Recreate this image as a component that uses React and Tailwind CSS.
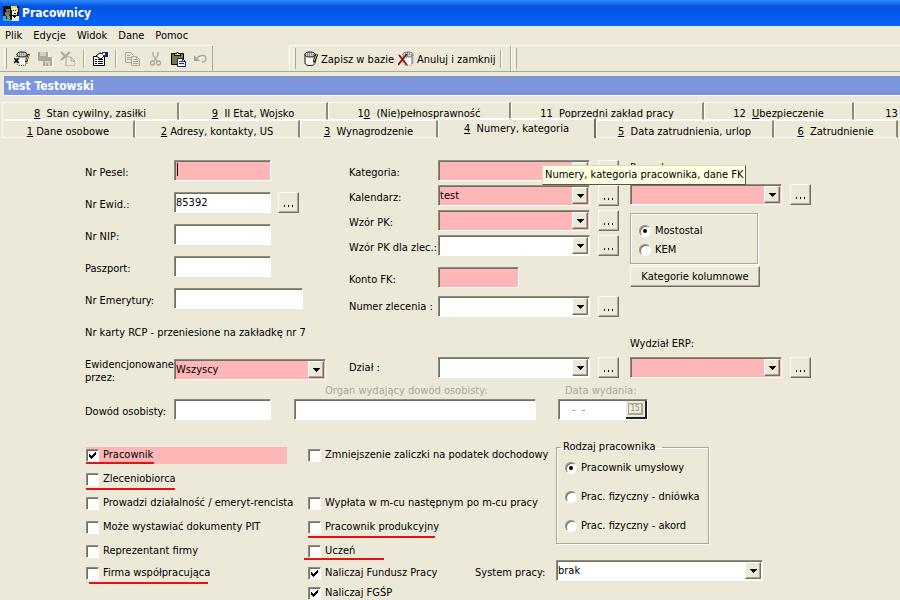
import clsx from 'clsx'

const sunken =
  'border border-t-[#8f8d80] border-l-[#8f8d80] border-r-white border-b-white shadow-[inset_1px_1px_0_#716f64] outline-none rounded-none'
const raised =
  'bg-[#ece9d8] border border-t-white border-l-white border-r-[#716f64] border-b-[#716f64] shadow-[inset_-1px_-1px_0_#aca899]'
const etched = 'border border-[#aca899] shadow-[1px_1px_0_#fff,inset_1px_1px_0_#fff]'

function TextField({ id, label, width = 'w-[97px]', pink, value = '', children }) {
  return (
    <div className="flex h-[21px]">
      <label htmlFor={id} className="w-[89px] shrink-0 pt-[5px]">{label}</label>
      <input
        id={id}
        defaultValue={value}
        className={clsx(sunken, width, 'h-[21px] pb-px pl-px', pink ? 'bg-[#ffb6b6]' : 'bg-white')}
      />
      {children}
    </div>
  )
}

function Combo({ id, value = '', pink, width = 'w-[152px]' }) {
  return (
    <div className={clsx('relative h-[21px] shrink-0', width)}>
      <select
        id={id}
        className={clsx(sunken, 'block h-[21px] w-full appearance-none pt-px pl-px pr-5', pink ? 'bg-[#ffb6b6]' : 'bg-white')}
      >
        <option>{value}</option>
      </select>
      <span className={clsx(raised, 'pointer-events-none absolute top-0.5 right-0.5 flex h-[17px] w-4 items-center justify-center')}>
        <svg width="7" height="4" viewBox="0 0 7 4" shapeRendering="crispEdges">
          <path d="M0 0h7v1H0zM1 1h5v1H1zM2 2h3v1H2zM3 3h1v1H3z" />
        </svg>
      </span>
    </div>
  )
}

function DotsButton({ label }) {
  return (
    <button type="button" aria-label={label} className={clsx(raised, 'flex h-[21px] w-[21px] shrink-0 items-center justify-center')}>
      <svg width="10" height="10" viewBox="0 0 10 10" shapeRendering="crispEdges">
        <path d="M0 7h1v2H0zM4 7h1v2H4zM8 7h1v2H8z" />
      </svg>
    </button>
  )
}

function ComboRow({ id, label, labelPad = 'pt-[5px]', ...rest }) {
  return (
    <div className="flex h-[21px]">
      <label htmlFor={id} className={clsx('w-[89px] shrink-0', labelPad)}>{label}</label>
      <Combo id={id} {...rest} />
      <div className="ml-2"><DotsButton label={label} /></div>
    </div>
  )
}

function Check({ label, checked, mark, pink, height = 'h-6' }) {
  return (
    <div className={clsx('relative flex items-center', height)}>
      <label className={clsx('flex items-center gap-1', pink && 'h-[17px] w-[201px] bg-[#ffb6b6]')}>
        <span className="relative h-[13px] w-[13px]">
          <input
            type="checkbox"
            defaultChecked={checked}
            className={clsx(sunken, 'peer block h-[13px] w-[13px] appearance-none bg-white')}
          />
          <svg
            width="7" height="7" viewBox="0 0 7 7" shapeRendering="crispEdges"
            className="pointer-events-none absolute top-[3px] left-[3px] hidden peer-checked:block"
          >
            <path d="M0 2h1v3H0zM1 3h1v3H1zM2 4h1v3H2zM3 3h1v3H3zM4 2h1v3H4zM5 1h1v3H5zM6 0h1v3H6z" />
          </svg>
        </span>
        {label}
      </label>
      {mark && <span className={clsx('absolute h-0.5 bg-[#e01414]', mark)} />}
    </div>
  )
}

function Radio({ name, label, checked }) {
  return (
    <label className="flex items-center gap-1">
      <span className="relative h-3 w-3">
        <input
          type="radio"
          name={name}
          defaultChecked={checked}
          className={clsx(sunken, 'peer block h-3 w-3 appearance-none !rounded-full bg-white')}
        />
        <span className="pointer-events-none absolute top-1 left-1 hidden h-1 w-1 rounded-full bg-black peer-checked:block" />
      </span>
      {label}
    </label>
  )
}

function Tab({ num, pre = '', label, width, active }) {
  return (
    <button
      type="button"
      role="tab"
      aria-selected={!!active}
      className={clsx(
        'shrink-0 border-t border-l border-white text-center',
        active
          ? 'relative -mt-0.5 h-5 border-r-2 border-r-[#716f64]'
          : 'h-[18px] border-r-2 border-b border-r-[#8b897c] pt-[3px]',
        width
      )}
    >
      {pre}{num && <u>{num}</u>}{label}
    </button>
  )
}

function Grip() {
  return <span className="h-[21px] w-[3px] border-l border-r border-l-white border-r-[#aca899]" />
}

function Sep() {
  return <span className="block h-[18px] w-0.5 border-l border-r border-l-[#aca899] border-r-white" />
}

function ToolButton({ label, children }) {
  return (
    <button type="button" aria-label={label} className="flex h-5 w-4 items-center justify-center">
      {children}
    </button>
  )
}

function Icon({ children }) {
  return <svg width="17" height="16" viewBox="0 0 17 16" className="shrink-0" fill="none">{children}</svg>
}

function Database({ dim, dotted }) {
  const line = dim ? '#77776c' : '#111'
  return (
    <g>
      <path d="M3 3v9c0 1.500 2 2.500 5 2.500s5-1 5-2.500V3" fill="#fff" stroke={line} strokeDasharray={dim || dotted ? '1 1' : 'none'} />
      <path d="M11 5v8.500c1.500-.5 2-1 2-1.500V4z" fill="#aaa" />
      <ellipse cx="8" cy="3.500" rx="5" ry="2.500" fill="#ccc" stroke={line} />
      <path d="M5 3h1M7 2h1M9 3h1M7 4h1M11 4h1M5 5h1" stroke="#555" />
    </g>
  )
}

function AppIcon() {
  return (
    <svg width="16" height="16" viewBox="0 0 16 16" shapeRendering="crispEdges">
      <path d="M0 1h16v14H0z" fill="#101820" />
      <path d="M2 4h5v6H2z" fill="#8d6f60" />
      <path d="M1 2h6v2H3v3H1z" fill="#080808" />
      <path d="M9 3h5v7H9z" fill="#f4ecc8" />
      <path d="M8 1h6v2H10v2H8zM13 3h2v4h-1z" fill="#e9db50" />
      <path d="M10 5h1v1h-1zM12 5h1v1h-1zM11 8h2v1h-2zM3 6h1v1H3zM5 6h1v1H5z" fill="#223" />
      <path d="M0 11h3v-1h3v1h2v5H0z" fill="#55a5a5" />
      <path d="M8 11h2l1 2 2-2h3v5H8z" fill="#e8f0ee" />
      <path d="M7 9h2v6H7zM3 11h1v3H3z" fill="#111" />
    </svg>
  )
}

const disabled = '#aca899'

function Toolbar() {
  return (
    <div className="flex h-[27px] shrink-0 border-b border-[#aca899]">
      <div className="flex w-[213px] shrink-0 items-center border-t border-r border-t-white border-r-[#aca899] pl-1">
        <Grip />
        <div className="ml-[7px] flex items-center gap-[7px]">
          <ToolButton label="Baza">
            <Icon>
              <Database dotted />
              <path d="M0 7l5 5M5 7l-5 5" stroke="#000" strokeWidth="1.500" />
              <path d="M15 3l-3 8" stroke="#000" strokeWidth="2" />
              <path d="M15 4l-3 6" stroke="#e6de50" />
            </Icon>
          </ToolButton>
          <ToolButton label="Zapisz">
            <Icon>
              <path d="M1 1h10v9H1zM6 6h9v9H6z" fill={disabled} />
              <path d="M3 1h6v4H3zM8 10h5v5H8z" fill="#d6d2c2" />
              <path d="M9 12h2v3H9zM8 6h5v2H8z" fill={disabled} />
              <path d="M12 1v5M16 7v9H6" stroke="#fff" />
            </Icon>
          </ToolButton>
          <ToolButton label="Usuń">
            <Icon>
              <path d="M1 1l9 9M10 1L1 9" stroke={disabled} strokeWidth="2" />
              <path d="M6 6h5l4 4v5H6z" fill="#ece9d8" stroke={disabled} />
              <path d="M11 6v4h4" stroke={disabled} />
              <path d="M16 10v6H7" stroke="#fff" />
            </Icon>
          </ToolButton>
          <Sep />
          <ToolButton label="Właściwości">
            <Icon>
              <path d="M1.500 5.500h11v9h-11z" fill="#fff" stroke="#000" />
              <path d="M3 8.500h2M6 8.500h5M3 10.500h2M6 10.500h5M3 12.500h2M6 12.500h5" stroke="#000" />
              <path d="M4 5l4-3 3 1 1 2-3 3-2-1z" fill="#fff" stroke="#000" />
              <path d="M10 1h6v5h-4z" fill="#1c2a7c" />
              <path d="M11 2h2v2h-2z" fill="#fff" />
            </Icon>
          </ToolButton>
          <Sep />
          <ToolButton label="Kopiuj">
            <Icon>
              <path d="M1.500 1.500h5l3 3v7h-8z" stroke={disabled} />
              <path d="M7.500 5.500h5l3 3v6h-8z" fill="#ece9d8" stroke={disabled} />
              <path d="M3 4.500h3M3 6.500h4M3 8.500h4M9 8.500h3M9 10.500h5M9 12.500h5M12.500 6v3H15" stroke={disabled} />
            </Icon>
          </ToolButton>
          <ToolButton label="Wytnij">
            <Icon>
              <path d="M6 1v3l4 6M11 1v3l-4 6" stroke={disabled} strokeWidth="1.300" />
              <circle cx="5.500" cy="12" r="2" stroke={disabled} strokeWidth="1.300" />
              <circle cx="11.500" cy="12" r="2" stroke={disabled} strokeWidth="1.300" />
            </Icon>
          </ToolButton>
          <ToolButton label="Wklej">
            <Icon>
              <path d="M1.500 2.500h12v11h-12z" fill="#77774a" stroke="#000" />
              <path d="M4.500 3.500V2.500h2l1-1.500 1 1.500h2v2h-6z" fill="#e8e4a0" stroke="#000" />
              <path d="M7.500 7.500h5l3 3v5h-8z" fill="#fff" stroke="#1c2460" />
              <path d="M9 10.500h3M9 12.500h5M12.500 8v2.500H15" stroke="#1c2460" />
            </Icon>
          </ToolButton>
          <ToolButton label="Cofnij">
            <Icon>
              <path d="M3 8c3-4 9-5 10-1 .5 2-1 4-4 4" stroke={disabled} strokeWidth="1.300" />
              <path d="M1 4v6h6z" fill={disabled} />
            </Icon>
          </ToolButton>
        </div>
      </div>
      <div className="ml-[76px] flex w-[222px] shrink-0 items-center border-t border-r border-l border-t-white border-r-[#aca899] border-l-white pl-[3px]">
        <Grip />
        <button type="button" className="ml-1.5 flex items-center gap-0.5">
          <Icon>
            <Database />
            <path d="M15 3l-3 8" stroke="#000" strokeWidth="2.500" />
            <path d="M15 3l-3 7" stroke="#e6de50" />
          </Icon>
          <span className="pt-0.5">Zapisz w bazie</span>
        </button>
        <button type="button" className="ml-1 flex items-center gap-0.5">
          <Icon>
            <g transform="translate(2 0)"><Database dim /></g>
            <path d="M1 4l8 10M9 3L0 14" stroke="#7c1212" strokeWidth="1.800" />
          </Icon>
          <span className="pt-0.5">Anuluj i zamknij</span>
        </button>
        <div className="ml-1"><Sep /></div>
      </div>
      <div className="flex flex-1 items-center border-t border-l border-white pl-0.5">
        <Grip />
      </div>
    </div>
  )
}

export default function App() {
  return (
    <div className="flex h-screen flex-col overflow-hidden bg-[#ece9d8] font-['DejaVu_Sans_Condensed','DejaVu_Sans',sans-serif] text-[11px] leading-4 whitespace-nowrap text-black">
      <header className="flex h-[26px] shrink-0 items-center gap-[3px] bg-linear-to-b from-[#2f8bff] via-[#0452e0] via-25% to-[#0562fb] pl-[3px] text-xs font-bold text-white">
        <AppIcon />
        <h1>Pracownicy</h1>
      </header>

      <nav className="flex h-[19px] shrink-0 items-center gap-[11px] pl-[5px]">
        {['Plik', 'Edycje', 'Widok', 'Dane', 'Pomoc'].map(m => (
          <button key={m} type="button">{m}</button>
        ))}
      </nav>

      <Toolbar />

      <div className="mt-1 ml-1 h-5 shrink-0 border-t border-b border-t-[#8a98b4] border-b-white bg-[#7b95de] pt-px pl-0.5 text-xs leading-4 font-bold text-white">
        Test Testowski
      </div>

      <div role="tablist" className="mt-1.5 ml-0.5 shrink-0">
        <div className="flex">
          <Tab num="8" label="&nbsp; Stan cywilny, zasiłki" width="w-[177px]" />
          <Tab num="9" label="&nbsp; II Etat, Wojsko" width="w-[149px]" />
          <Tab pre="1" num="0" label="&nbsp; (Nie)pełnosprawność" width="w-[183px]" />
          <Tab pre={'11\u00a0 Pop'} num="r" label="zedni zakład pracy" width="w-[193px]" />
          <Tab pre={'12\u00a0 '} num="U" label="bezpieczenie" width="w-[150px]" />
          <Tab pre="13" label="" width="w-[76px]" />
        </div>
        <div className="flex">
          <Tab num="1" label=" Dane osobowe" width="w-[133px]" />
          <Tab num="2" label=" Adresy, kontakty, US" width="w-[165px]" />
          <Tab num="3" label="&nbsp; Wynagrodzenie" width="w-[138px]" />
          <Tab num="4" label="&nbsp; Numery, kategoria" width="w-[158px]" active />
          <Tab num="5" label="&nbsp; Data zatrudnienia, urlop" width="w-[178px]" />
          <Tab num="6" label="&nbsp; Zatrudnienie" width="w-[124px]" />
        </div>
      </div>

      <form className="pt-[22px] pl-[85px]">
        <div className="flex">
          {/* identification numbers */}
          <div className="flex w-[264px] shrink-0 flex-col gap-[11px]">
            <div className="relative">
              <TextField id="pesel" label="Nr Pesel:" pink />
              <span className="absolute top-[3px] left-[92px] h-[13px] w-px bg-black" />
            </div>
            <TextField id="ewid" label="Nr Ewid.:" value="85392">
              <div className="ml-[7px]"><DotsButton label="Nr Ewid." /></div>
            </TextField>
            <TextField id="nip" label="Nr NIP:" />
            <TextField id="paszport" label="Paszport:" />
            <TextField id="emerytura" label="Nr Emerytury:" width="w-[129px]" />
            <p className="h-[21px] pt-[5px]">Nr karty RCP - przeniesione na zakładkę nr 7</p>
            <div className="mt-[7px] flex h-[21px]">
              <label htmlFor="przez" className="-mt-px w-[89px] shrink-0 leading-[13px]">Ewidencjonowane<br />przez:</label>
              <Combo id="przez" value="Wszyscy" pink />
            </div>
          </div>

          {/* category and accounting */}
          <div className="relative flex w-[281px] shrink-0 flex-col gap-1">
            <ComboRow id="kategoria" label="Kategoria:" pink />
            <ComboRow id="kalendarz" label="Kalendarz:" value="test" pink />
            <ComboRow id="wzor" label="Wzór PK:" pink />
            <ComboRow id="wzorzlec" label="Wzór PK dla zlec.:" />
            <div className="mt-[7px]">
              <TextField id="konto" label="Konto FK:" width="w-[81px]" pink />
            </div>
            <div className="mt-1"><ComboRow id="zlecenie" label="Numer zlecenia :" labelPad="pt-[3px]" /></div>
            <div className="mt-9"><ComboRow id="dzial" label="Dział :" labelPad="pt-[3px]" /></div>
            <div role="tooltip" className="absolute top-[5px] left-[193px] z-10 border border-t-[#d8d6c0] border-r-[#55534a] border-b-[#55534a] border-l-[#d8d6c0] bg-[#ffffe1] pr-px pl-0.5 leading-[18px]">
              Numery, kategoria pracownika, dane FK
            </div>
          </div>

          {/* employer */}
          <div className="w-[181px] shrink-0">
            <label htmlFor="pracodawca" className="block h-6">Pracodawca:</label>
            <div className="flex gap-2">
              <Combo id="pracodawca" pink />
              <DotsButton label="Pracodawca" />
            </div>
            <div className={clsx(etched, 'mt-2 flex h-[51px] w-[128px] flex-col justify-center gap-[3px] pt-1 pl-2')}>
              <Radio name="firma" label="Mostostal" checked />
              <Radio name="firma" label="KEM" />
            </div>
            <button type="button" className={clsx(raised, 'mt-0.5 block h-[21px] w-[130px] pt-px')}>Kategorie kolumnowe</button>
            <label htmlFor="erp" className="mt-[49px] block">Wydział ERP:</label>
            <div className="mt-[5px] flex gap-2">
              <Combo id="erp" pink />
              <DotsButton label="Wydział ERP" />
            </div>
          </div>
        </div>

        {/* identity card */}
        <div className="mt-[3px] flex items-end">
          <TextField id="dowod" label="Dowód osobisty:" />
          <div className="ml-[23px] w-[242px]">
            <label htmlFor="organ" className="block pl-[31px] text-[#aca899]">Organ wydający dowód osobisty:</label>
            <input id="organ" className={clsx(sunken, 'block h-[21px] w-full bg-white px-0.5')} />
          </div>
          <div className="ml-[22px] w-[90px]">
            <label htmlFor="data" className="block pl-[7px] text-[#aca899]">Data wydania:</label>
            <div className={clsx(sunken, 'flex h-[21px] bg-white pt-px pl-px')}>
              <input id="data" disabled defaultValue="-  -" className="w-full min-w-0 pl-3 text-[#8a887c]" />
              <button type="button" disabled aria-label="Kalendarz" className="flex h-[18px] w-[21px] shrink-0 items-center justify-center border-r-2 border-b-2 border-[#222] bg-[#ece9d8] text-[#8f8d80]">
                <span className="border border-r-2 border-b-2 border-[#aca899] px-px text-[8px] leading-[9px]">15</span>
              </button>
            </div>
          </div>
        </div>

        {/* flags */}
        <div className="mt-[23px] ml-px flex">
          <div className="w-[222px] shrink-0">
            <Check label="Pracownik" checked pink mark="bottom-[3px] left-0 w-[68px]" />
            <Check label="Zleceniobiorca" mark="bottom-px left-0 w-[89px]" />
            <Check label="Prowadzi działalność / emeryt-rencista" />
            <Check label="Może wystawiać dokumenty PIT" />
            <Check label="Reprezentant firmy" />
            <Check label="Firma współpracująca" height="h-5" mark="-bottom-px left-[3px] w-[119px]" />
          </div>
          <div>
            <div className="flex h-[120px]">
              <div className="w-[248px] shrink-0">
                <Check label="Zmniejszenie zaliczki na podatek dochodowy" />
                <div className="mt-6"><Check label="Wypłata w m-cu następnym po m-cu pracy" /></div>
                <Check label="Pracownik produkcyjny" mark="bottom-px left-0 w-[127px]" />
                <Check label="Uczeń" mark="bottom-[3px] -left-1 w-20" />
              </div>
              <fieldset className={clsx(etched, '-mt-1 h-[105px] w-[152px] px-2')}>
                <legend className="-ml-1 px-0.5 pr-1.5">Rodzaj pracownika</legend>
                <div className="flex flex-col gap-[13px] pt-[5px]">
                  <Radio name="rodzaj" label="Pracownik umysłowy" checked />
                  <Radio name="rodzaj" label="Prac. fizyczny - dniówka" />
                  <Radio name="rodzaj" label="Prac. fizyczny - akord" />
                </div>
              </fieldset>
            </div>
            <div className="flex">
              <div className="w-[167px]">
                <Check label="Naliczaj Fundusz Pracy" checked height="h-5" />
                <Check label="Naliczaj FGŚP" checked height="h-5" />
              </div>
              <label htmlFor="system" className="w-[81px] pt-0.5">System pracy:</label>
              <div className="-mt-[3px]"><Combo id="system" value="brak" width="w-[207px]" /></div>
            </div>
          </div>
        </div>
      </form>
    </div>
  )
}
